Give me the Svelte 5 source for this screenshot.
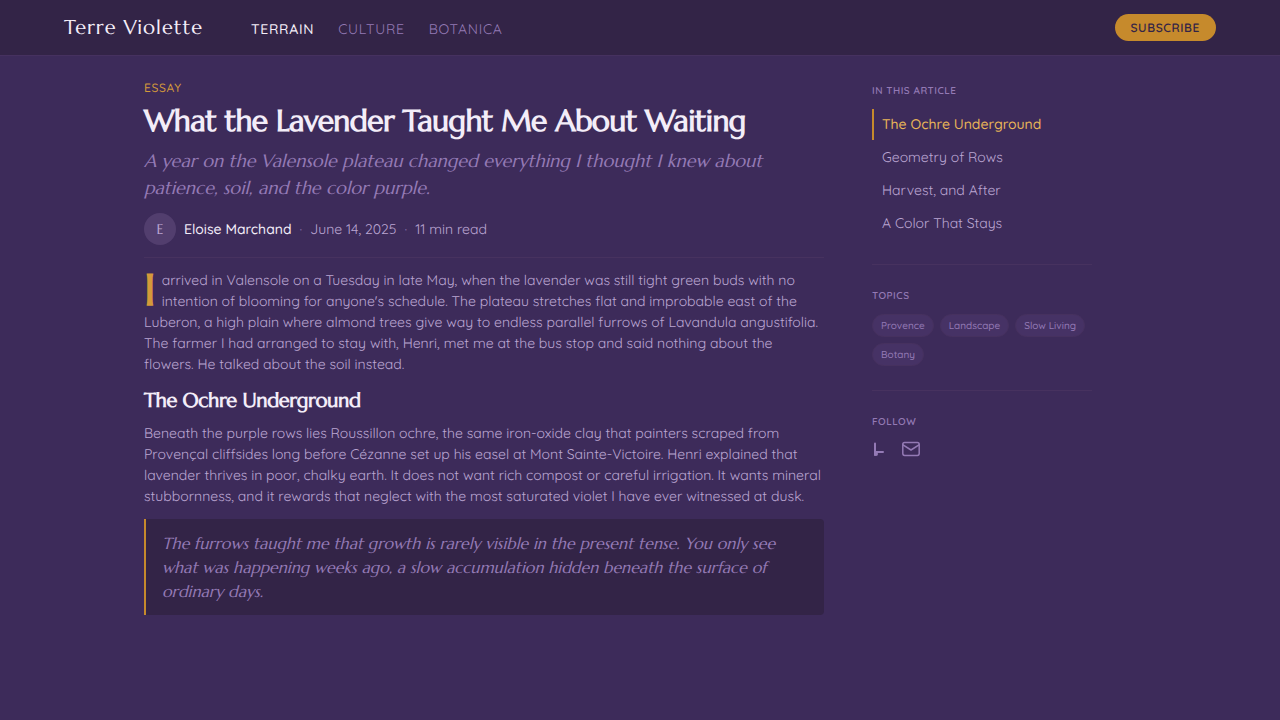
<script lang="ts">
	const sections = [
		{ label: "Terrain", href: "#terrain" },
		{ label: "Culture", href: "#culture" },
		{ label: "Botanica", href: "#botanica" },
	];
	const contents = [
		{ label: "The Ochre Underground", href: "#ochre" },
		{ label: "Geometry of Rows", href: "#geometry" },
		{ label: "Harvest, and After", href: "#harvest" },
		{ label: "A Color That Stays", href: "#color" },
	];
	const topics = ["Provence", "Landscape", "Slow Living", "Botany"];

	let currentSection = $state("Terrain");
	let currentHeading = $state("The Ochre Underground");
</script>

<header class="site-header">
	<div class="site-nav">
		<a class="brand" href="#top">Terre Violette</a>
		<nav class="sections" aria-label="Sections">
			{#each sections as item}
				<a
					href={item.href}
					class:active={item.label === currentSection}
					onclick={() => (currentSection = item.label)}>{item.label}</a
				>
			{/each}
		</nav>
	</div>
	<button class="subscribe" type="button">Subscribe</button>
</header>

<div class="layout">
	<main>
		<p class="kicker">Essay</p>
		<h1>What the Lavender Taught Me About Waiting</h1>
		<p class="deck">
			A year on the Valensole plateau changed everything I thought I knew about
			patience, soil, and the color purple.
		</p>
		<div class="byline">
			<span class="avatar" aria-hidden="true">E</span>
			<span class="author">Eloise Marchand</span>
			<span class="dot">·</span>
			<time datetime="2025-06-14">June 14, 2025</time>
			<span class="dot">·</span>
			<span>11 min read</span>
		</div>

		<p class="lead">
			<span class="drop">I</span> arrived in Valensole on a Tuesday in late May,
			when the lavender was still tight green buds with no intention of blooming
			for anyone's schedule. The plateau stretches flat and improbable east of
			the Luberon, a high plain where almond trees give way to endless parallel
			furrows of Lavandula angustifolia. The farmer I had arranged to stay with,
			Henri, met me at the bus stop and said nothing about the flowers. He
			talked about the soil instead.
		</p>

		<h2 id="ochre">The Ochre Underground</h2>
		<p>
			Beneath the purple rows lies Roussillon ochre, the same iron-oxide clay
			that painters scraped from Provençal cliffsides long before Cézanne set up
			his easel at Mont Sainte-Victoire. Henri explained that lavender thrives
			in poor, chalky earth. It does not want rich compost or careful
			irrigation. It wants mineral stubbornness, and it rewards that neglect
			with the most saturated violet I have ever witnessed at dusk.
		</p>

		<blockquote>
			The furrows taught me that growth is rarely visible in the present tense.
			You only see what was happening weeks ago, a slow accumulation hidden
			beneath the surface of ordinary days.
		</blockquote>
	</main>

	<aside>
		<section>
			<h3>In this article</h3>
			<nav class="contents" aria-label="In this article">
				{#each contents as item}
					<a
						href={item.href}
						class:active={item.label === currentHeading}
						onclick={() => (currentHeading = item.label)}>{item.label}</a
					>
				{/each}
			</nav>
		</section>
		<section>
			<h3>Topics</h3>
			<div class="topics">
				{#each topics as topic}
					<a href="#topics">{topic}</a>
				{/each}
			</div>
		</section>
		<section>
			<h3>Follow</h3>
			<div class="follow">
				<a href="#social" aria-label="Social">
					<svg width="18" height="18" viewBox="0 0 18 18" aria-hidden="true">
						<path
							d="M3 3.5V15M3 12H11"
							fill="none"
							stroke="currentColor"
							stroke-width="2"
							stroke-linecap="round"
						/>
						<circle cx="4" cy="14" r="2" fill="currentColor" />
					</svg>
				</a>
				<a href="#newsletter" aria-label="Newsletter">
					<svg width="18" height="18" viewBox="0 0 18 18" aria-hidden="true">
						<g
							fill="none"
							stroke="currentColor"
							stroke-width="1.5"
							stroke-linecap="round"
							stroke-linejoin="round"
						>
							<rect x="0.8" y="2.6" width="16.4" height="12.8" rx="1.8" />
							<path d="M1 4.8L9 10L17 4.8" />
						</g>
					</svg>
				</a>
			</div>
		</section>
	</aside>
</div>

<style>
	:global(body) {
		margin: 0;
		background: #3d2b5a;
		color: #bba6d2;
		font-family: Quicksand, Lato, sans-serif;
		font-size: 14px;
		line-height: 21px;
		text-rendering: geometricPrecision;
	}

	a {
		color: inherit;
		text-decoration: none;
	}

	h1,
	h2,
	h3,
	p,
	blockquote {
		margin: 0;
	}

	.brand,
	h1,
	h2,
	.deck,
	.avatar,
	.drop,
	blockquote {
		font-family: Marcellus, Lato, sans-serif;
	}

	.site-header {
		display: flex;
		align-items: center;
		justify-content: space-between;
		padding: 14px 64px;
		background: #332447;
		border-bottom: 1px solid #46315f;
	}

	.site-nav {
		display: flex;
		align-items: baseline;
		gap: 48px;
		padding-top: 2px;
	}

	.brand {
		color: #f3edf8;
		font-size: 20px;
		letter-spacing: 0.05em;
	}

	.sections {
		display: flex;
		gap: 24px;
		color: #947ab5;
		letter-spacing: 0.05em;
		text-transform: uppercase;
	}

	.sections .active {
		color: #f3edf8;
		font-weight: 500;
	}

	.subscribe {
		padding: 5px 16px;
		border: 0;
		border-radius: 14px;
		background: #c68a2c;
		color: #332447;
		font: inherit;
		font-size: 12px;
		font-weight: 600;
		line-height: 17px;
		letter-spacing: 0.05em;
		text-transform: uppercase;
		text-rendering: inherit;
		cursor: pointer;
	}

	.layout {
		display: grid;
		grid-template-columns: minmax(0, 680px) 220px;
		gap: 48px;
		box-sizing: border-box;
		max-width: 1120px;
		margin: 0 auto;
		padding: 24px 64px;
	}

	.kicker {
		color: #d49a3a;
		font-size: 12px;
		font-weight: 500;
		line-height: 16px;
		letter-spacing: 0.05em;
		text-transform: uppercase;
	}

	h1 {
		margin-top: 8px;
		color: #f3edf8;
		font-size: 30px;
		font-weight: 700;
		line-height: 36px;
		letter-spacing: -0.02em;
	}

	.deck {
		margin-top: 8px;
		color: #947ab5;
		font-size: 18px;
		font-style: italic;
		line-height: 27px;
	}

	.byline {
		display: flex;
		align-items: center;
		gap: 8px;
		margin-top: 11px;
		padding-bottom: 12px;
		border-bottom: 1px solid #47325f;
	}

	.avatar {
		display: grid;
		place-items: center;
		width: 32px;
		height: 32px;
		border-radius: 50%;
		background: #523e6e;
	}

	.author {
		color: #f3edf8;
		font-weight: 500;
	}

	.dot {
		color: #947ab5;
	}

	.lead {
		margin-top: 12px;
	}

	.drop {
		float: left;
		margin-right: 6px;
		color: #d49a3a;
		font-size: 44px;
		font-weight: 700;
		line-height: 42px;
	}

	h2 {
		margin: 13px 0 9px;
		color: #f3edf8;
		font-size: 20px;
		font-weight: 700;
		line-height: 26px;
		letter-spacing: -0.02em;
	}

	blockquote {
		margin-top: 12px;
		padding: 13px 16px 11px;
		border-left: 2px solid #c68a2c;
		border-radius: 0 4px 4px 0;
		background: #332447;
		color: #947ab5;
		font-size: 16px;
		font-style: italic;
		line-height: 24px;
	}

	section + section {
		margin-top: 24px;
		padding-top: 20px;
		border-top: 1px solid #47325f;
	}

	h3 {
		margin-bottom: 8px;
		color: #947ab5;
		font-size: 10px;
		font-weight: 600;
		line-height: 21px;
		letter-spacing: 0.05em;
		text-transform: uppercase;
	}

	.contents {
		display: grid;
		gap: 2px;
		padding-bottom: 1px;
	}

	.contents a {
		padding: 5px 8px;
		border-left: 2px solid transparent;
	}

	.contents .active {
		border-color: #c68a2c;
		color: #e8b458;
		font-weight: 500;
	}

	.topics {
		display: flex;
		flex-wrap: wrap;
		gap: 6px;
	}

	.topics a {
		padding: 4px 8px;
		border: 1px solid #46315f;
		border-radius: 12px;
		background: #463265;
		color: #947ab5;
		font-size: 10px;
		font-weight: 500;
		line-height: 13px;
	}

	.follow {
		display: flex;
		gap: 12px;
		color: #947ab5;
	}

	.follow svg {
		display: block;
	}
</style>
